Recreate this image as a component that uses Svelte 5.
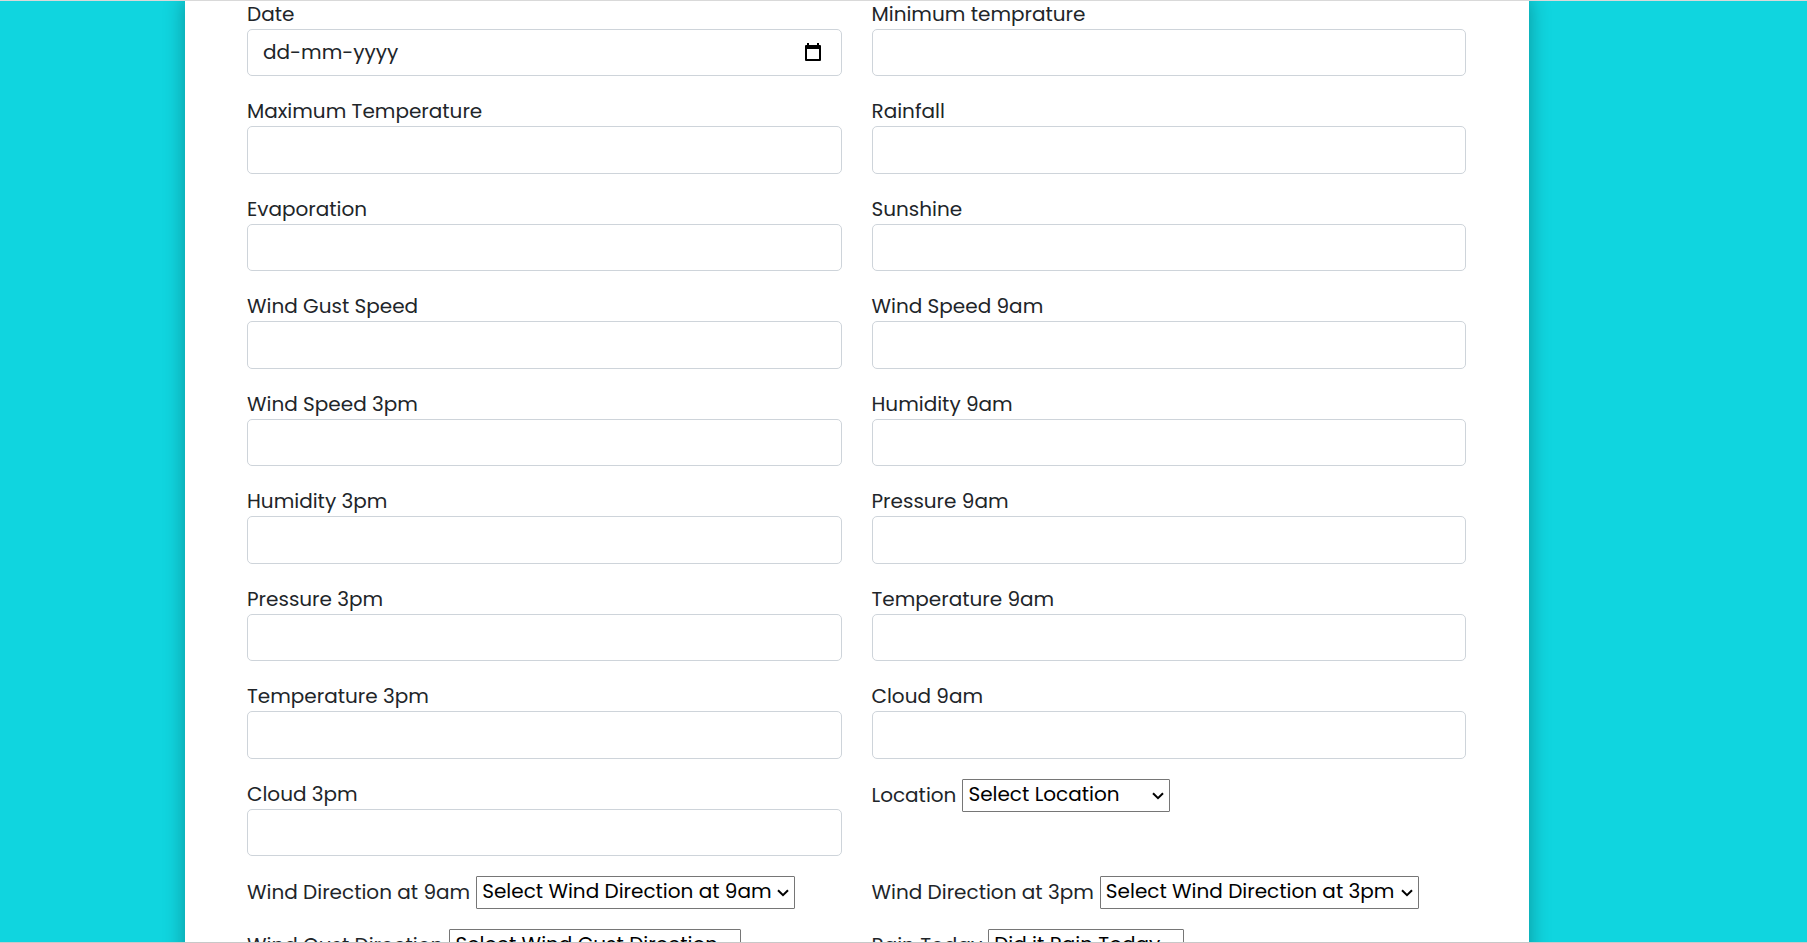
<script>
  const numeric = [
    'Minimum temprature', 'Maximum Temperature', 'Rainfall', 'Evaporation', 'Sunshine',
    'Wind Gust Speed', 'Wind Speed 9am', 'Wind Speed 3pm', 'Humidity 9am', 'Humidity 3pm',
    'Pressure 9am', 'Pressure 3pm', 'Temperature 9am', 'Temperature 3pm', 'Cloud 9am', 'Cloud 3pm'
  ];
  const selects = [
    { label: 'Location', prompt: 'Select Location', width: 208 },
    { label: 'Wind Direction at 9am', prompt: 'Select Wind Direction at 9am', width: 319 },
    { label: 'Wind Direction at 3pm', prompt: 'Select Wind Direction at 3pm', width: 319 },
    { label: 'Wind Gust Direction', prompt: 'Select Wind Gust Direction', width: 292 },
    { label: 'Rain Today', prompt: 'Did it Rain Today', width: 196 }
  ];
  const slug = (s) => s.toLowerCase().replaceAll(' ', '-');
</script>

<main class="page">
  <form class="card">
    <div class="field">
      <label for="date">Date</label>
      <div class="date control">
        <input id="date" type="text" placeholder="dd-mm-yyyy" />
        <button type="button" aria-label="Open calendar">
          <svg viewBox="0 0 20 20" width="20" height="20">
            <path fill-rule="evenodd" d="M4 1h2v2h8V1h2v2h1a1 1 0 0 1 1 1v14a1 1 0 0 1-1 1H3a1 1 0 0 1-1-1V4a1 1 0 0 1 1-1h1zM4 7v10h12V7z" />
          </svg>
        </button>
      </div>
    </div>
    {#each numeric as name}
      <div class="field">
        <label for={slug(name)}>{name}</label>
        <input class="control" id={slug(name)} type="text" />
      </div>
    {/each}
    {#each selects as s}
      <div class="choice">
        <label for={slug(s.label)}>{s.label}</label>
        <span class="select" style="width: {s.width}px">
          <select id={slug(s.label)}><option>{s.prompt}</option></select>
          <svg viewBox="0 0 12 8" width="12" height="8"><path d="M1 1.2 6 6.2 11 1.2" /></svg>
        </span>
      </div>
    {/each}
  </form>
</main>

<style>
  :global(body) {
    margin: 0;
  }
  .page,
  .page * {
    box-sizing: border-box;
  }
  .page {
    height: 100vh;
    overflow: hidden;
    padding: 0 278px 0 185px;
    border-top: 1px solid #d9d9d9;
    border-bottom: 1px solid #c8c8c8;
    background: #10d5df;
    color: #212529;
    font-family: Poppins, Inter, sans-serif;
    font-size: 20px;
    font-weight: 400;
    line-height: 30px;
  }
  .card {
    display: grid;
    grid-template-columns: 1fr 1fr;
    gap: 20px 30px;
    margin-top: -2px;
    padding: 0 63px 60px 62px;
    background: #fff;
    box-shadow: 0 0 20px rgba(0, 0, 0, 0.32);
  }
  .field label {
    display: block;
  }
  .control {
    display: block;
    width: 100%;
    height: 47px;
    padding: 0 15px 2px;
    border: 1px solid #ced4da;
    border-radius: 5px;
    background: #fff;
    color: inherit;
    font: inherit;
  }
  .field:nth-child(4n + 3) .control,
  .field:nth-child(4n + 4) .control {
    height: 48px;
  }
  .date {
    display: flex;
    align-items: center;
    justify-content: space-between;
  }
  .date input {
    flex: 1;
    min-width: 0;
    padding: 0;
    border: 0;
    outline: 0;
    background: none;
    color: inherit;
    font: inherit;
  }
  .date input::placeholder {
    color: #212529;
    opacity: 1;
  }
  .date button {
    display: flex;
    padding: 0 3px;
    border: 0;
    background: none;
  }
  .choice {
    display: flex;
    align-items: flex-start;
    gap: 6px;
    height: 33px;
    line-height: 33px;
    white-space: nowrap;
  }
  .select {
    position: relative;
  }
  select {
    display: block;
    width: 100%;
    height: 33px;
    padding: 0 5px 4px;
    appearance: none;
    border: 1px solid #767676;
    border-radius: 1px;
    background: #fff;
    color: #000;
    font: inherit;
    line-height: 28px;
  }
  .select svg {
    position: absolute;
    top: 13px;
    right: 6px;
    fill: none;
    stroke: #000;
    stroke-width: 2;
    pointer-events: none;
  }
</style>
